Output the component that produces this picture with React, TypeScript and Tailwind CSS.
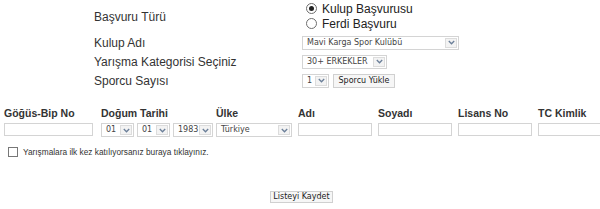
import React from "react";

const Chevron = () => (
  <svg width="7" height="5" viewBox="0 0 7 5" className="block">
    <path d="M0.8 1 L3.5 3.8 L6.2 1" fill="none" stroke="#6b7f99" strokeWidth="1.3" />
  </svg>
);

function FakeSelect({ text, w }: { text: string; w: string }) {
  return (
    <div className={`flex h-[14px] items-stretch border border-[#d4d4d4] bg-white ${w}`}>
      <div
        className="flex flex-1 items-center overflow-hidden whitespace-nowrap pl-[4px] text-[8px] leading-none text-[#444]"
        style={{ fontFamily: '"DejaVu Sans", Verdana, sans-serif' }}
      >
        {text}
      </div>
      <div className="my-[1px] mr-[1px] flex w-[12px] shrink-0 items-center justify-center border border-[#dcdcdc] bg-[#f3f3f3]">
        <Chevron />
      </div>
    </div>
  );
}

function Radio({ checked, label }: { checked?: boolean; label: string }) {
  return (
    <div className="flex h-[15px] items-center">
      <div className="ml-[4px] mr-[5px] flex h-[11px] w-[11px] items-center justify-center rounded-full border border-[#6e6e6e] bg-white">
        {checked && <div className="h-[5px] w-[5px] rounded-full bg-[#222]" />}
      </div>
      <span className="text-[12px] text-[#222]">{label}</span>
    </div>
  );
}

export default function App() {
  const sans = { fontFamily: '"Liberation Sans", Arial, sans-serif' };
  return (
    <div className="h-[209px] w-[600px] bg-white text-[#222]" style={sans}>
      {/* top form */}
      <div className="pl-[94px] pt-[1px]">
        <div className="grid grid-cols-[208px_1fr]">
          <div className="flex h-[32px] items-center text-[12px] text-[#333]">Başvuru Türü</div>
          <div className="flex flex-col">
            <Radio checked label="Kulup Başvurusu" />
            <Radio label="Ferdi Başvuru" />
          </div>

          <div className="flex h-[19px] items-center text-[12px] text-[#333]">Kulup Adı</div>
          <div className="flex items-center">
            <FakeSelect text="Mavi Karga Spor Kulübü" w="w-[157px]" />
          </div>

          <div className="flex h-[19px] items-center text-[12px] text-[#333]">Yarışma Kategorisi Seçiniz</div>
          <div className="flex items-center">
            <FakeSelect text="30+ ERKEKLER" w="w-[85px]" />
          </div>

          <div className="flex h-[19px] items-center text-[12px] text-[#333]">Sporcu Sayısı</div>
          <div className="flex items-center gap-[4px]">
            <FakeSelect text="1" w="w-[27px]" />
            <button
              className="flex h-[14px] w-[62px] items-center justify-center border border-[#d0d0d0] bg-[#f6f6f6] text-[8px] leading-none text-[#222]"
              style={{ fontFamily: '"DejaVu Sans", Verdana, sans-serif' }}
            >
              Sporcu Yükle
            </button>
          </div>
        </div>
      </div>

      {/* athlete table */}
      <div className="mt-[15px] grid grid-cols-[97px_115px_82px_80px_80px_80px_62px] pl-[4px]">
        {["Göğüs-Bip No", "Doğum Tarihi", "Ülke", "Adı", "Soyadı", "Lisans No", "TC Kimlik"].map((h) => (
          <div key={h} className="flex h-[17px] items-center whitespace-nowrap text-[10.5px] font-bold text-[#333]">
            {h}
          </div>
        ))}
        <div className="pt-[1px]">
          <div className="h-[13px] w-[89px] border border-[#d4d4d4] bg-white" />
        </div>
        <div className="flex gap-[3px] pt-[1px]">
          <FakeSelect text="01" w="w-[33px]" />
          <FakeSelect text="01" w="w-[33px]" />
          <FakeSelect text="1983" w="w-[40px]" />
        </div>
        <div className="pt-[1px]">
          <FakeSelect text="Türkiye" w="w-[76px]" />
        </div>
        {[0, 1, 2, 3].map((i) => (
          <div key={i} className="pt-[1px]">
            <div className="h-[13px] w-[74px] border border-[#d4d4d4] bg-white" />
          </div>
        ))}
      </div>

      <div className="mt-[9px] flex items-center pl-[8px]">
        <div className="mr-[5px] h-[10px] w-[10px] border border-[#777] bg-white" />
        <span className="text-[8.3px] text-[#333]">Yarışmalara ilk kez katılıyorsanız buraya tıklayınız.</span>
      </div>

      <div className="mt-[33px] flex pl-[270px]">
        <button
          className="flex h-[12px] w-[63px] items-center justify-center border border-[#d0d0d0] bg-[#f6f6f6] text-[8px] leading-none text-[#222]"
          style={{ fontFamily: '"DejaVu Sans", Verdana, sans-serif' }}
        >
          Listeyi Kaydet
        </button>
      </div>
    </div>
  );
}
